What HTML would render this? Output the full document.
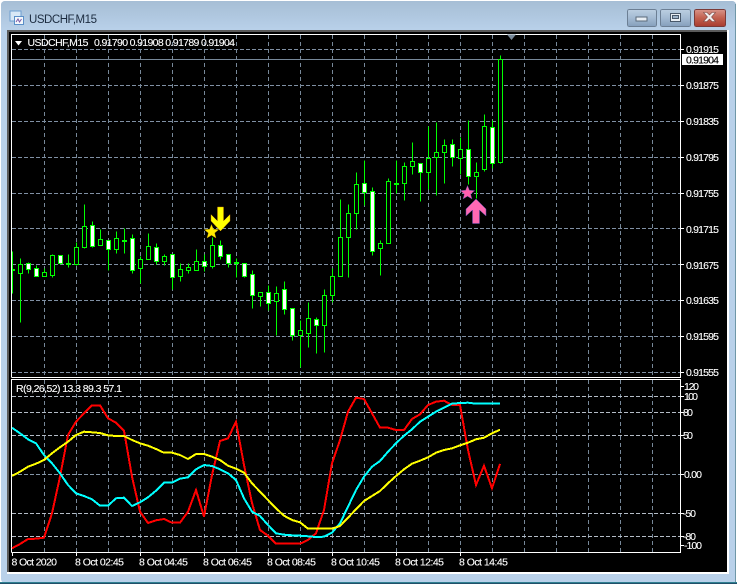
<!DOCTYPE html>
<html><head><meta charset="utf-8"><title>USDCHF,M15</title>
<style>
html,body{margin:0;padding:0;background:#fff;width:737px;height:584px;overflow:hidden}
svg{display:block;position:absolute;left:0;top:0}
text{font-family:"Liberation Sans",sans-serif;font-size:10.500px;fill:#fff;stroke:#fff;stroke-width:.12}
</style></head><body>
<svg width="737" height="584" viewBox="0 0 737 584" xmlns="http://www.w3.org/2000/svg">
<defs>
<linearGradient id="t" x1="0" y1="0" x2="0" y2="1"><stop offset="0" stop-color="#a6bed5"/><stop offset="1" stop-color="#b9d1ea"/></linearGradient>
<linearGradient id="b" x1="0" y1="0" x2="0" y2="1"><stop offset="0" stop-color="#bccfe2"/><stop offset=".5" stop-color="#a3bad2"/><stop offset="1" stop-color="#859fbc"/></linearGradient>
<linearGradient id="c" x1="0" y1="0" x2="0" y2="1"><stop offset="0" stop-color="#d8948a"/><stop offset=".5" stop-color="#c2604f"/><stop offset="1" stop-color="#a83c30"/></linearGradient>
</defs>
<!-- window frame -->
<rect x="1" y="1" width="735" height="582" rx="4" fill="#b9d1ea"/>
<rect x="1" y="1" width="735" height="30" rx="4" fill="url(#t)"/>
<rect x="0" y="582" width="737" height="1" fill="#2f7f90"/>
<rect x="0" y="583" width="737" height="1" fill="#20506a"/>
<rect x="735" y="4" width="1" height="578" fill="#6f97a8"/>
<rect x="7" y="30" width="722" height="544" fill="#fff"/>
<rect x="7" y="30" width="720" height="542" fill="#5a5a5a"/>
<rect x="9" y="32" width="718" height="540" fill="#000"/>
<!-- title -->
<rect x="10" y="11" width="11" height="10" fill="#d9e8f6" stroke="#6f9fd0" stroke-width="1"/>
<rect x="14.500" y="16.500" width="9" height="8" fill="#f4f8fc" stroke="#5a8fc8" stroke-width="1"/>
<path d="M16 22l2-3 1.500 3 2-3" fill="none" stroke="#7a5aa8" stroke-width="1"/>
<text x="29" y="23" textLength="68" style="font-size:11.500px;fill:#1c2c40;stroke:none">USDCHF,M15</text>
<!-- window buttons -->
<g shape-rendering="crispEdges">
<rect x="627.500" y="9.500" width="29" height="17" rx="2" fill="url(#b)" stroke="#6c7f94"/>
<rect x="636" y="17" width="11" height="4" fill="#e8eef4" stroke="#5a6a7a" stroke-width="1"/>
<rect x="660.500" y="9.500" width="30" height="17" rx="2" fill="url(#b)" stroke="#6c7f94"/>
<rect x="670.500" y="13.500" width="10" height="8" fill="#e8eef4" stroke="#48586a"/>
<rect x="672.500" y="15.500" width="6" height="3" fill="#9fb4ca" stroke="#48586a"/>
<rect x="694.500" y="9.500" width="31" height="17" rx="2" fill="url(#c)" stroke="#7a3a38"/>
</g>
<path d="M703.500 12.500h3.500l2.500 2.500 2.500-2.500h3.500l-4 4.500 4 4.500h-3.500l-2.500-2.500-2.500 2.500h-3.500l4-4.500z" fill="#f2eeee" stroke="#7a4a48" stroke-width=".6"/>
<!-- grid main -->
<g fill="none" shape-rendering="crispEdges">
<path stroke="#8090a4" stroke-dasharray="4 2" d="M12 49.500H680M12 85.500H680M12 121.500H680M12 157.500H680M12 193.500H680M12 228.500H680M12 264.500H680M12 300.500H680M12 336.500H680M12 372.500H680"/>
<path stroke="#778899" stroke-dasharray="4 3" d="M44.500 35V377M76.500 35V377M108.500 35V377M140.500 35V377M172.500 35V377M204.500 35V377M236.500 35V377M268.500 35V377M300.500 35V377M332.500 35V377M364.500 35V377M396.500 35V377M428.500 35V377M460.500 35V377M492.500 35V377M524.500 35V377M556.500 35V377M588.500 35V377M620.500 35V377M652.500 35V377"/>
<path stroke="#778899" d="M12 59.500H681"/>
<!-- grid sub -->
<path stroke="#778899" stroke-dasharray="4 3" d="M44.500 380V552M76.500 380V552M108.500 380V552M140.500 380V552M172.500 380V552M204.500 380V552M236.500 380V552M268.500 380V552M300.500 380V552M332.500 380V552M364.500 380V552M396.500 380V552M428.500 380V552M460.500 380V552M492.500 380V552M524.500 380V552M556.500 380V552M588.500 380V552M620.500 380V552M652.500 380V552"/>
<path stroke="#b4bcc6" stroke-dasharray="4 2" d="M12 396.500H680M12 412.500H680M12 435.500H680M12 513.500H680M12 536.500H680"/>
<path stroke="#8496a8" stroke-dasharray="4 2" d="M12 474.500H680"/>
<!-- chart borders -->
<path stroke="#fff" d="M11.500 377.500V34.500H680.500V377.500H11.500M11.500 552.500V379.500H680.500V552.500H11.500"/>
<!-- ticks -->
<path stroke="#fff" d="M681 49.500h3M681 85.500h3M681 121.500h3M681 157.500h3M681 193.500h3M681 228.500h3M681 264.500h3M681 300.500h3M681 336.500h3M681 372.500h3M681 396.500h3M681 412.500h3M681 435.500h3M681 474.500h3M681 513.500h3M681 536.500h3M681 386.500h3M681 545.500h3M12.500 553v3M76.500 553v3M140.500 553v3M204.500 553v3M268.500 553v3M332.500 553v3M396.500 553v3M460.500 553v3"/>
</g>
<!-- candles -->
<g transform="translate(.5 .5)" shape-rendering="crispEdges">
<path fill="none" stroke="#00ff00" d="M12 251V293M20 258V322M28 262V273M36 265V276M44 268V276M52 254V277M60 255V264M68 254V267M76 242V265M84 204V248M92 221V247M100 229V245M108 240V270M116 231V253M124 228V253M132 234V273M140 256V283M148 233V259M156 243V264M164 254V265M172 254V289M180 263V281M188 263V273M196 249V270M204 254V271M212 237V268M220 240V259M228 254V267M236 258V277M244 263V277M252 270V308M260 292V306M268 285V310M276 286V335M284 281V314M292 308V340M300 320V367M308 302V347M316 317V353M324 289V352M332 268V302M340 199V276M348 204V277M356 172V229M364 160V205M372 187V255M380 240V275M388 178V243M396 160V193M404 162V200M412 142V174M420 163V201M428 126V189M436 122V195M444 139V183M452 139V166M460 137V174M468 120V184M476 162V198M484 114V171M492 120V168M500 55V163"/>
<path fill="#000" stroke="#00ff00" d="M12 269h2v1h-2zM66 263h4v1h-4zM122 240h4v1h-4zM234 262h4v1h-4zM394 183h4v1h-4zM18 264h4v9h-4zM42 272h4v4h-4zM50 255h4v20h-4zM74 247h4v17h-4zM82 226h4v21h-4zM98 239h4v6h-4zM114 238h4v11h-4zM138 259h4v9h-4zM146 246h4v13h-4zM162 256h4v5h-4zM178 269h4v7h-4zM186 267h4v3h-4zM194 261h4v9h-4zM210 245h4v21h-4zM258 292h4v4h-4zM274 293h4v8h-4zM298 330h4v5h-4zM306 318h4v15h-4zM322 295h4v30h-4zM330 276h4v19h-4zM338 237h4v39h-4zM346 213h4v24h-4zM354 184h4v29h-4zM378 243h4v5h-4zM386 181h4v62h-4zM402 166h4v17h-4zM410 161h4v5h-4zM426 158h4v14h-4zM434 152h4v5h-4zM442 145h4v7h-4zM458 149h4v9h-4zM474 172h4v4h-4zM482 126h4v43h-4zM498 59h4v103h-4z"/>
<path fill="#fff" stroke="#00ff00" d="M26 263h4v6h-4zM34 268h4v8h-4zM58 255h4v8h-4zM90 225h4v21h-4zM106 240h4v9h-4zM130 238h4v32h-4zM154 247h4v14h-4zM170 254h4v23h-4zM202 261h4v5h-4zM218 245h4v11h-4zM226 254h4v9h-4zM242 263h4v13h-4zM250 274h4v21h-4zM266 292h4v11h-4zM282 289h4v20h-4zM290 308h4v27h-4zM314 319h4v6h-4zM362 183h4v9h-4zM370 191h4v60h-4zM418 163h4v9h-4zM450 144h4v13h-4zM466 149h4v27h-4zM490 127h4v36h-4z"/>
</g>
<!-- markers -->
<polygon points="211.500,224.500 213.400,229.300 218.700,229.600 214.600,233 216,238 211.500,235.200 207,238 208.400,233 204.300,229.600 209.600,229.300" fill="#ffea00" stroke="#c8a000" stroke-width=".3"/>
<polygon points="217.500,207 223.500,207 223.500,221 230,214.500 230,221 220.500,231 211,221 211,214.500 217.500,221" fill="#ffff00" stroke="#d08000" stroke-width=".4"/>
<polygon points="467.500,185.500 469.400,190.300 474.700,190.600 470.600,194 472,199 467.500,196.200 463,199 464.400,194 460.300,190.600 465.600,190.300" fill="#ff5fae" stroke="#5a50b0" stroke-width=".4"/>
<polygon points="476,199 486,209 486,216 479.500,210 479.500,223.500 472.500,223.500 472.500,210 466,216 466,209" fill="#ff69b4" stroke="#5a50b0" stroke-width=".5"/>
<polygon points="507,34.500 516,34.500 511.500,40" fill="#778899"/>
<!-- indicator lines -->
<g fill="none" stroke-width="2" shape-rendering="crispEdges">
<polyline stroke="#ff0000" points="12,548.300 20,544 28,539 36,538.700 44,537.700 52,513.300 60,476.700 68,435 76,421.700 84,413.300 92,405.300 100,405.300 108,418.300 116,422.700 124,430.700 132,476.700 140,511.700 148,523 156,520.300 164,519 172,522.700 180,522.700 188,511.700 196,490 204,516.700 212,475 220,441 228,438.300 236,421.700 244,465 252,503 260,530 268,535.700 276,543.700 284,543.700 292,543.700 300,543.700 308,540 316,533.300 324,510 332,463.300 340,440 348,411.700 356,397.700 364,399 372,413.300 380,427.700 388,427.700 396,430 404,430 412,419 420,414.300 428,405 436,401.700 444,400.700 452,405 460,405 468,450 476,485 484,465.700 492,488.300 500,464"/>
<polyline stroke="#00ffff" points="12,427.700 20,433.300 28,439.300 36,443.300 44,455 52,463.300 60,473.300 68,485 76,493.300 84,496 92,499.300 100,505.700 108,505.700 116,498.300 124,497.700 132,506 140,502.300 148,497.300 156,490.700 164,482.700 172,482.700 180,478.700 188,477.300 196,469.300 204,465 212,466 220,469.300 228,473.300 236,480 244,498.300 252,511.700 260,516 268,525 276,533.300 284,534.700 292,535.300 300,535.700 308,536.300 316,537 324,536.700 332,532.700 340,523.300 348,506.700 356,490 364,476.700 372,466.700 380,461 388,451.700 396,443.300 404,435.700 412,429.300 420,421.700 428,416.700 436,411.700 444,407.700 452,403.700 460,403 468,402.700 476,403.700 484,403.700 492,403.700 500,403.700"/>
<polyline stroke="#ffff00" points="12,476 20,471.700 28,466.700 36,463.700 44,460 52,453.300 60,447.300 68,441.700 76,435 84,431.700 92,432.300 100,433 108,435.300 116,436 124,436 132,440 140,443.300 148,445.700 156,449 164,452.700 172,452.700 180,455 188,459 196,454 204,454 212,456.700 220,460 228,465.700 236,468.700 244,472.700 252,483.300 260,491.700 268,500 276,508.300 284,515.700 292,520 300,522.300 308,528.700 316,528.700 324,528.700 332,528.700 340,526 348,517.700 356,509.300 364,501 372,496 380,491 388,483.300 396,476 404,469.300 412,463.700 420,460.700 428,457.300 436,452.700 444,450 452,448.300 460,445.300 468,442.700 476,439.300 484,437.700 492,433.300 500,429.700"/>
</g>
<!-- header text -->
<polygon points="15,41 22,41 18.500,45.500" fill="#fff"/>
<text x="27.500" y="46" textLength="61">USDCHF,M15</text>
<text x="94" y="46" textLength="141">0.91790 0.91908 0.91789 0.91904</text>
<text x="16" y="392" textLength="106">R(9,26,52) 13.3 89.3 57.1</text>
<!-- price labels -->
<text x="686" y="53" textLength="33">0.91915</text>
<rect x="682" y="54" width="41" height="11" fill="#fff"/>
<text x="686" y="63.500" textLength="33" style="fill:#000;stroke:#000">0.91904</text>
<text x="686" y="89" textLength="33">0.91875</text>
<text x="686" y="125" textLength="33">0.91835</text>
<text x="686" y="161" textLength="33">0.91795</text>
<text x="686" y="197" textLength="33">0.91755</text>
<text x="686" y="233" textLength="33">0.91715</text>
<text x="686" y="269" textLength="33">0.91675</text>
<text x="686" y="304" textLength="33">0.91635</text>
<text x="686" y="340" textLength="33">0.91595</text>
<text x="686" y="376" textLength="33">0.91555</text>
<!-- sub labels -->
<text x="684" y="390" textLength="15">120</text>
<text x="684" y="400" textLength="14">100</text>
<text x="683" y="416" textLength="10">80</text>
<text x="683" y="439" textLength="10">50</text>
<text x="684" y="478" textLength="18">0.00</text>
<text x="683" y="517" textLength="13">-50</text>
<text x="683" y="540" textLength="13">-80</text>
<text x="684" y="549" textLength="18">-100</text>
<!-- time labels -->
<text x="11.500" y="565.500" textLength="45.500">8 Oct 2020</text>
<text x="75" y="565.500" textLength="49">8 Oct 02:45</text>
<text x="139" y="565.500" textLength="49">8 Oct 04:45</text>
<text x="203" y="565.500" textLength="49">8 Oct 06:45</text>
<text x="267" y="565.500" textLength="49">8 Oct 08:45</text>
<text x="331" y="565.500" textLength="49">8 Oct 10:45</text>
<text x="395" y="565.500" textLength="49">8 Oct 12:45</text>
<text x="459" y="565.500" textLength="49">8 Oct 14:45</text>
</svg>
</body></html>
